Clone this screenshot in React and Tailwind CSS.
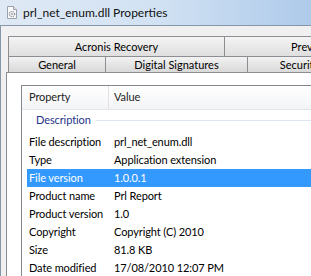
import React from 'react'

const rows = [
  ['File description', 'prl_net_enum.dll'],
  ['Type', 'Application extension'],
  ['File version', '1.0.0.1', true],
  ['Product name', 'Prl Report'],
  ['Product version', '1.0'],
  ['Copyright', 'Copyright (C) 2010'],
  ['Size', '81.8 KB'],
  ['Date modified', '17/08/2010 12:07 PM'],
]

const DllIcon = () => (
  <svg width="12" height="13" viewBox="0 0 12 13">
    <path d="M1.5 0.5h6l3 3v9h-9z" fill="#fbfbfb" stroke="#9aa3ad" />
    <path d="M7.5 0.5v3h3" fill="#e6e9ec" stroke="#9aa3ad" />
    <circle cx="6" cy="8" r="2.6" fill="none" stroke="#8e959c" strokeWidth="1.4" strokeDasharray="1.2 0.9" />
    <circle cx="6" cy="8" r="1.1" fill="#a7adb3" />
  </svg>
)

const App = () => {
  return (
    <div className="w-[311px] h-[276px] overflow-hidden bg-[#cddff1] font-['Lato',sans-serif] text-[11px] text-black">
      <div className="h-[25px] flex items-center pl-[6px] gap-[5px] bg-gradient-to-r from-[#dfe9f5] via-[#d2e2f3] to-[#aecaea]">
        <DllIcon />
        <span className="text-[12px] text-[#111] leading-none">prl_net_enum.dll Properties</span>
      </div>
      <div className="flex h-[251px]">
        <div className="w-[2px] bg-[#d4e3f3]" />
        <div className="flex-1 flex flex-col border-l border-t border-[#8797aa] bg-[#f0f0f0] pl-[5px] pt-[10px]">
          <div className="ml-[2px] flex flex-col">
            <div className="flex h-[20px] leading-none">
              <div className="w-[217px] shrink-0 flex items-center justify-center border border-b-0 border-[#8c8e94] bg-gradient-to-b from-[#f4f4f4] to-[#dfdfdf]">Acronis Recovery</div>
              <div className="w-[218px] shrink-0 flex items-center justify-center border border-b-0 border-l-0 border-[#8c8e94] bg-gradient-to-b from-[#f4f4f4] to-[#dfdfdf]">Previous Versions</div>
            </div>
            <div className="flex h-[16px] leading-none">
              <div className="w-[98px] shrink-0 flex items-center justify-center border border-b-0 border-[#8c8e94] bg-gradient-to-b from-[#f2f2f2] to-[#d9d9d9]">General</div>
              <div className="w-[142px] shrink-0 flex items-center justify-center border border-b-0 border-l-0 border-[#8c8e94] bg-gradient-to-b from-[#f2f2f2] to-[#d9d9d9]">Digital Signatures</div>
              <div className="w-[104px] shrink-0 flex items-center justify-center border border-b-0 border-l-0 border-[#8c8e94] bg-gradient-to-b from-[#f2f2f2] to-[#d9d9d9]">Security</div>
            </div>
          </div>
          <div className="flex-1 border-l border-t border-[#8c8e94] bg-white pl-[14px] pt-[12px]">
            <div className="w-[400px] h-full border border-[#828790] bg-white tracking-[-0.1px]">
              <div className="flex h-[24px] items-center border-b border-[#e5e5e5] bg-gradient-to-b from-[#ffffff] to-[#f3f4f6] text-[#222]">
                <div className="w-[87px] h-full flex items-center pl-[7px] border-r border-[#e2e2e2]">Property</div>
                <div className="pl-[5px]">Value</div>
              </div>
              <div className="h-[23px] flex items-center pl-[14px] pb-[2px]">
                <span className="text-[#1e3287]">Description</span>
                <div className="flex-1 ml-[5px] h-px bg-[#dfe5ee]" />
              </div>
              {rows.map(([label, value, selected]) => (
                <div
                  key={label}
                  className={
                    selected
                      ? 'ml-[5px] h-[18px] flex items-center bg-[#3399ff] text-white'
                      : 'ml-[5px] h-[18px] flex items-center'
                  }
                >
                  <div className="w-[85px] pl-[2px] shrink-0 whitespace-nowrap">{label}</div>
                  <div className="pl-[2px] whitespace-nowrap">{value}</div>
                </div>
              ))}
            </div>
          </div>
        </div>
      </div>
    </div>
  )
}

export default App
